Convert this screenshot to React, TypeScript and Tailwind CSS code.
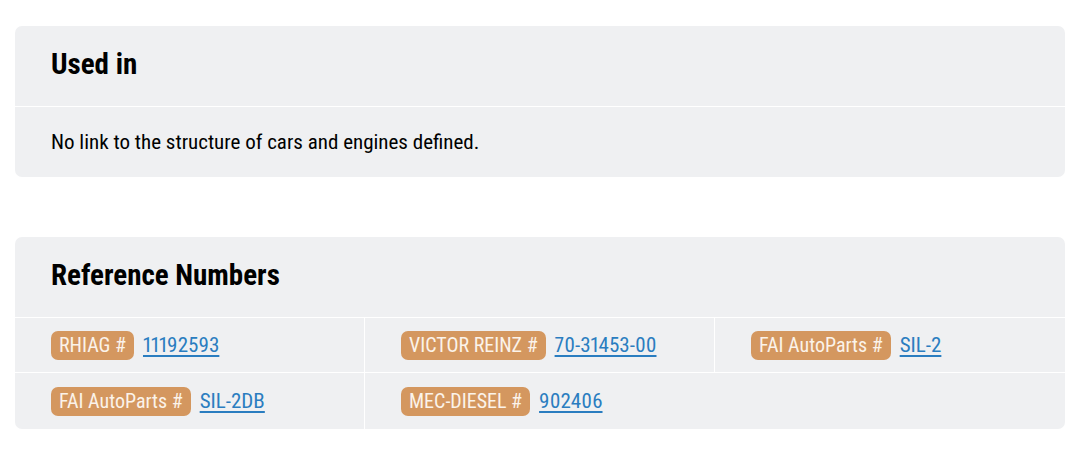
import React from "react";

const font = { fontFamily: '"Roboto Condensed", Roboto, sans-serif' };

function Ref({ label, value, last }: { label: string; value: string; last?: boolean }) {
  return (
    <div className={`flex items-center ${last ? "h-[56px]" : "h-[54px]"} px-[36px] whitespace-nowrap`}>
      <span className="bg-[#d4975f] text-[#fbf3ea] rounded-[7px] px-[8px] h-[29px] flex items-center text-[20px] leading-none proportional-nums">
        {label}
      </span>
      <a href="#" className="ml-[9px] text-[#2a7dc0] underline text-[21px] leading-none underline-offset-[3px] proportional-nums">
        {value}
      </a>
    </div>
  );
}

export default function App() {
  return (
    <div className="bg-white w-[1090px] h-[475px] pt-[26px] pl-[15px] pr-[25px] font-stretch-condensed" style={font}>
      <div className="bg-[#eff0f2] rounded-[7px]">
        <div className="h-[81px] flex items-center px-[36px] pb-[4px] border-b border-white">
          <h2 className="text-[29px] font-bold text-black leading-none">Used in</h2>
        </div>
        <div className="h-[70px] flex items-center px-[36px]">
          <p className="text-[21px] text-black leading-none">No link to the structure of cars and engines defined.</p>
        </div>
      </div>
      <div className="bg-[#eff0f2] rounded-[7px] mt-[60px]">
        <div className="h-[81px] flex items-center px-[36px] pb-[4px] border-b border-white">
          <h2 className="text-[29px] font-bold text-black leading-none">Reference Numbers</h2>
        </div>
        <div className="grid grid-cols-3">
          <div className="border-r border-b border-white"><Ref label="RHIAG #" value="11192593" /></div>
          <div className="border-r border-b border-white"><Ref label="VICTOR REINZ #" value="70-31453-00" /></div>
          <div className="border-b border-white"><Ref label="FAI AutoParts #" value="SIL-2" /></div>
          <div className="border-r border-white"><Ref label="FAI AutoParts #" value="SIL-2DB" last /></div>
          <div><Ref label="MEC-DIESEL #" value="902406" last /></div>
          <div></div>
        </div>
      </div>
    </div>
  );
}
